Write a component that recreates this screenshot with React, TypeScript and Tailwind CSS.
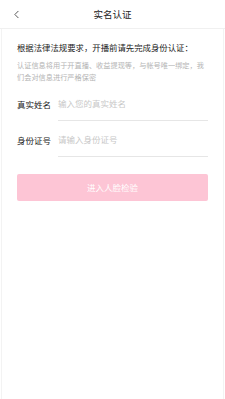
import { ChevronLeft } from 'lucide-react';

const font = { fontFamily: '"Noto Sans CJK SC", "Noto Sans", sans-serif' };

function Field({ label, placeholder }: { label: string; placeholder: string }) {
  return (
    <div className="flex items-end h-[36px]">
      <div className="w-[41px] pb-[13px] text-[8.5px] leading-none text-[#222]">{label}</div>
      <div className="flex-1 border-b border-[#e6e6e6] pb-[13px] text-[8.5px] leading-none text-[#c8c8c8]">
        {placeholder}
      </div>
    </div>
  );
}

export default function App() {
  return (
    <div className="w-[225px] h-[399px] bg-white flex flex-col overflow-hidden" style={font}>
      {/* Header */}
      <div className="relative h-[29px] flex items-center justify-center border-b border-[#f0f0f0]">
        <ChevronLeft className="absolute left-[10px] top-[8px] text-[#333]" size={13} strokeWidth={1.5} />
        <span className="text-[9.5px] text-[#222]">实名认证</span>
      </div>

      {/* Body */}
      <div className="flex-1 mx-[1px] border-x border-[#f3f3f3] px-[15px]">
        <p className="mt-[13px] text-[8.4px] leading-[10px] text-[#222] whitespace-nowrap">
          根据法律法规要求，开播前请先完成身份认证：
        </p>
        <p className="mt-[7px] text-[7.2px] leading-[12px] text-[#b4b4b4]">
          认证信息将用于开直播、收益提现等，与帐号唯一绑定，我们会对信息进行严格保密
        </p>

        <div className="mt-[2px] flex flex-col">
          <Field label="真实姓名" placeholder="输入您的真实姓名" />
          <Field label="身份证号" placeholder="请输入身份证号" />
        </div>

        <button className="mt-[17px] w-full h-[27px] rounded-[2px] bg-[#fdc5d5] text-white text-[8.5px]">
          进入人脸检验
        </button>
      </div>
    </div>
  );
}
